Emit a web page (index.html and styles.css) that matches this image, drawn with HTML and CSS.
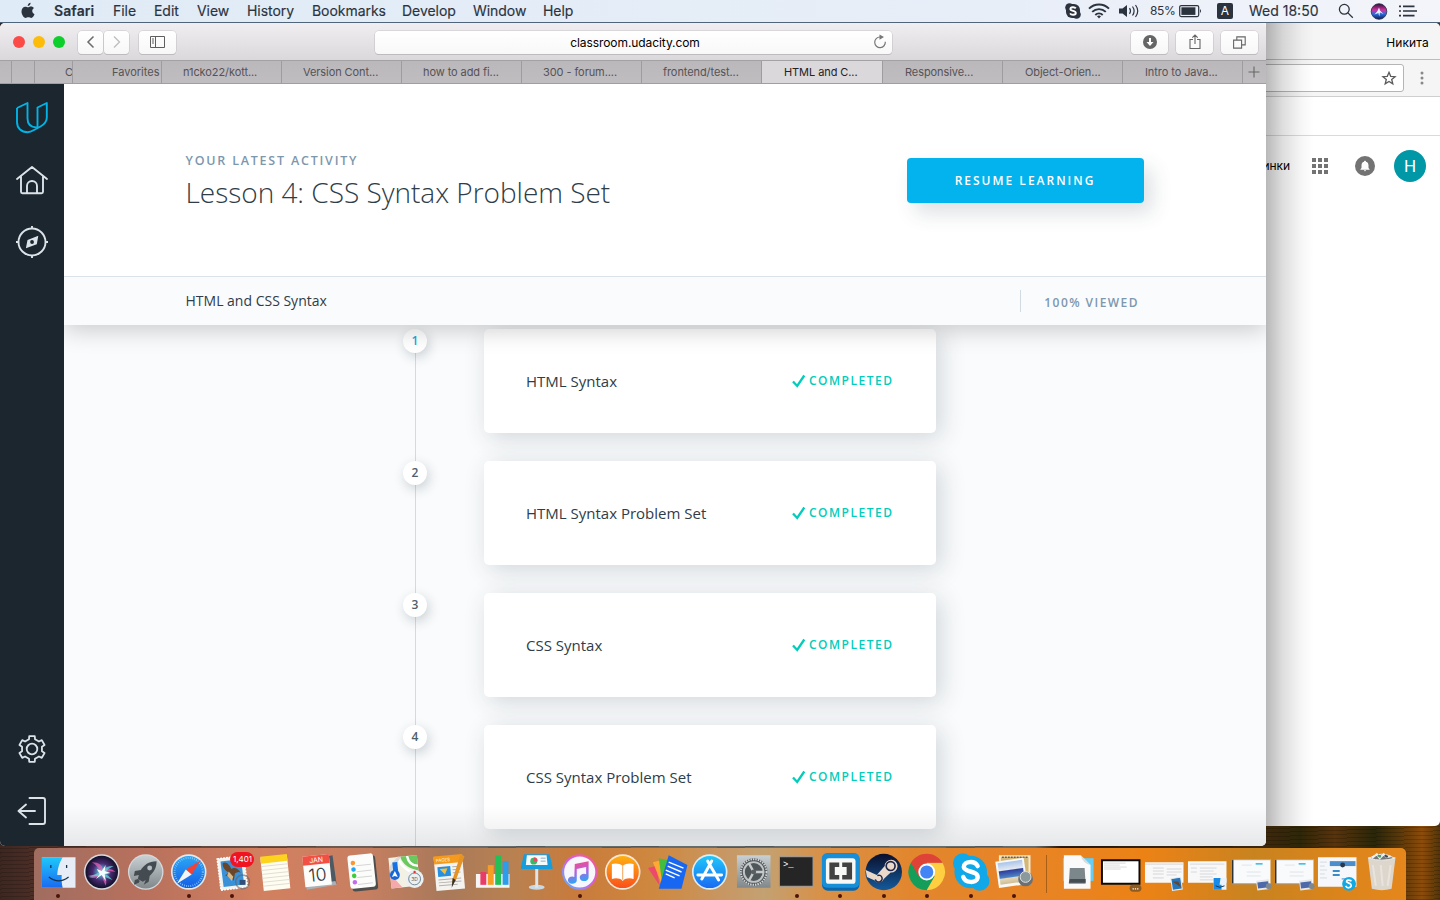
FILE: index.html
```html
<!DOCTYPE html>
<html lang="en">
<head>
<meta charset="utf-8">
<title>Udacity Classroom</title>
<link rel="stylesheet" href="styles.css">
</head>
<body>
<div class="desktop">

  <header class="menubar">
    <svg class="apple" width="14" height="18" viewBox="0 0 14 18"><path d="M9.600 .8c.1 1.700-1.200 3.300-2.900 3.300C6.500 2.500 8 .9 9.600.8zM7 5.300c.7 0 1.600-.8 3-.8 1.200 0 2.300.6 3 1.600-2.600 1.500-2.100 5 .500 6.100-.6 1.600-1.900 3.700-3.200 3.700-1.100 0-1.600-.7-2.900-.7s-1.900.7-2.900.7C2.700 15.900.5 12.500.5 9.500c0-3 1.900-4.800 3.800-4.800 1.200 0 2 .6 2.700.6z" fill="#2b333e"/></svg>
    <nav class="menu">
      <b>Safari</b><span>File</span><span>Edit</span><span>View</span><span>History</span><span>Bookmarks</span><span>Develop</span><span>Window</span><span>Help</span>
    </nav>
    <svg class="sys-skype" width="16" height="16" viewBox="0 0 16 16"><rect x="1" y="1" width="14" height="14" rx="6" fill="#2b333e"/><circle cx="4.500" cy="4.500" r="4.300" fill="#2b333e"/><circle cx="11.500" cy="11.500" r="4.300" fill="#2b333e"/><path d="M10.800 5.400C9.600 3.600 5.400 3.800 5.400 6c0 2.500 5.400 1.400 5.400 4 0 2.300-4.600 2.400-5.700.4" fill="none" stroke="#fff" stroke-width="1.900"/></svg>
    <svg class="sys-wifi" width="22" height="16" viewBox="0 0 22 16" fill="none" stroke="#2b333e" stroke-width="1.900"><path d="M1 5.600a14.200 14.200 0 0 1 20 0M4.200 8.900a9.700 9.700 0 0 1 13.600 0M7.300 12a5.300 5.300 0 0 1 7.400 0"/><path d="M11 15.500l-2-2.200a3 3 0 0 1 4 0z" fill="#2b333e" stroke="none"/></svg>
    <svg class="sys-vol" width="22" height="16" viewBox="0 0 22 16"><path d="M1 5.500h3.500L9 2v12l-4.500-3.500H1z" fill="#2b333e"/><path d="M11.500 5.200q2 2.800 0 5.600M14.500 3.500q3.200 4.500 0 9M17.500 2q4.500 6 0 12" fill="none" stroke="#2b333e" stroke-width="1.200"/></svg>
    <span class="battery-text">85%</span>
    <svg class="sys-batt" width="24" height="14" viewBox="0 0 24 14"><rect x=".7" y="1.600" width="19" height="11" rx="1.500" fill="none" stroke="#2b333e" stroke-width="1.200"/><rect x="2.400" y="3.300" width="14" height="7.600" fill="#2b333e"/><path d="M21 5q2 2 0 4z" fill="#2b333e"/></svg>
    <span class="input-source">A</span>
    <span class="clock">Wed 18:50</span>
    <svg class="sys-search" width="16" height="16" viewBox="0 0 16 16" fill="none" stroke="#2b333e" stroke-width="1.300"><circle cx="6.300" cy="6.300" r="4.900"/><path d="M9.900 9.900l4.900 4.900"/></svg>
    <svg class="sys-siri" width="17" height="17" viewBox="0 0 17 17"><defs><linearGradient id="siri-s" x2="0" y2="1"><stop offset="0" stop-color="#2a1138"/><stop offset=".4" stop-color="#d62fa0"/><stop offset=".65" stop-color="#2a6ee0"/><stop offset="1" stop-color="#101a50"/></linearGradient></defs><circle cx="8" cy="8.500" r="7.800" fill="url(#siri-s)" stroke="#262b45" stroke-width=".8"/><path d="M8 4.500l1 3 3.500 3.500L9 9.500l-.8 4-.8-3.500-3.900 1.500 3-3.500z" fill="#dff3ff"/></svg>
    <svg class="sys-list" width="19" height="14" viewBox="0 0 19 14" stroke="#2b333e" stroke-width="1.700"><path d="M4 2.300h11.500M4 7h14M4 11.700h11.500M0 2.300h2M0 7h2M0 11.700h2"/></svg>
  </header>

  <section class="chrome-window">
    <div class="chrome-title">Никита</div>
    <div class="chrome-bar">
      <div class="omnibox"><svg width="16" height="16" viewBox="0 0 16 16"><path d="M8 2.300l1.700 4 4.400.4-3.400 2.800 1.100 4.300L8 11.500l-3.800 2.300 1.100-4.300-3.400-2.800 4.400-.4z" fill="none" stroke="#5a5a5a" stroke-width="1.300"/></svg></div>
      <svg class="kebab" width="4" height="14" viewBox="0 0 4 14" fill="#888"><circle cx="2" cy="2" r="1.500"/><circle cx="2" cy="7" r="1.500"/><circle cx="2" cy="12" r="1.500"/></svg>
    </div>
    <div class="chrome-strip"></div>
    <div class="google-bar">
      <span class="images-link">Картинки</span>
      <svg width="16" height="16" viewBox="0 0 16 16" fill="#737373"><path d="M0 0h4v4H0zM6 0h4v4H6zM12 0h4v4h-4zM0 6h4v4H0zM6 6h4v4H6zM12 6h4v4h-4zM0 12h4v4H0zM6 12h4v4H6zM12 12h4v4h-4z"/></svg>
      <svg class="bell" width="20" height="20" viewBox="0 0 20 20"><circle cx="10" cy="10" r="10" fill="#737373"/><path d="M10 4.800c.7 0 1 .4 1 1 1.800.5 2.500 1.900 2.500 3.700v2.500l1.100 1.200v.5H5.400v-.5L6.500 12V9.500c0-1.800.7-3.200 2.500-3.700 0-.6.3-1 1-1zM8.900 14.200h2.200q-.2 1-1.100 1t-1.100-1z" fill="#fff"/></svg>
      <span class="avatar">H</span>
    </div>
  </section>

  <main class="safari">
    <div class="toolbar">
      <i class="light red"></i><i class="light yellow"></i><i class="light green"></i>
      <div class="btn back"><svg width="10" height="14" viewBox="0 0 10 14"><path d="M7.500 1.500L2 7l5.500 5.500" fill="none" stroke="#6b6b6b" stroke-width="1.500"/></svg></div>
      <div class="btn fwd"><svg width="10" height="14" viewBox="0 0 10 14"><path d="M2 1.500L7.500 7 2 12.500" fill="none" stroke="#bdbdbd" stroke-width="1.300"/></svg></div>
      <div class="btn side"><svg width="15" height="12" viewBox="0 0 15 12"><path d="M.5.500h14v11H.5zM5.500.500v11M2 3h2M2 5h2M2 7h2" fill="none" stroke="#5e5e5e"/></svg></div>
      <div class="address"><span>classroom.udacity.com</span><svg width="14" height="14" viewBox="0 0 14 14"><path d="M12.300 6.800A5.300 5.300 0 1 1 7 2" fill="none" stroke="#777" stroke-width="1.200"/><path d="M6.500-.5L11 2 6.500 4.800z" fill="#777"/></svg></div>
      <div class="btn tool down"><svg width="14" height="14" viewBox="0 0 14 14"><circle cx="7" cy="7" r="7" fill="#666"/><path d="M6 3h2v4h2.500L7 11 3.500 7H6z" fill="#fff"/></svg></div>
      <div class="btn tool"><svg width="12" height="16" viewBox="0 0 12 16" fill="none" stroke="#666" stroke-width="1.100"><path d="M4 5.500H1v9h10v-9H8M6 10V1.200M3.300 3.700L6 1l2.700 2.700"/></svg></div>
      <div class="btn tool"><svg width="13" height="13" viewBox="0 0 13 13" fill="none" stroke="#666" stroke-width="1.100"><path d="M.6 4.100h8v8h-8zM3.800 4V.9h8.400v8H8.700"/></svg></div>
    </div>
    <div class="tabs">
      <span></span><span></span><span class="pin">C</span><span class="fav">Favorites</span>
      <span>n1cko22/kott...</span><span>Version Cont...</span><span>how to add fi...</span><span>300 - forum....</span><span>frontend/test...</span><span class="active">HTML and C...</span><span>Responsive...</span><span>Object-Orien...</span><span>Intro to Java...</span>
      <span class="plus"><svg width="12" height="12" viewBox="0 0 12 12"><path d="M6 .5v11M.5 6h11" stroke="#666" stroke-width="1.100"/></svg></span>
    </div>
    <div class="page">
      <aside class="rail">
        <svg class="logo" width="32" height="32" viewBox="0 0 32 32" fill="none" stroke="#02b3e4" stroke-width="1.900" stroke-linejoin="round"><path d="M1 6L11.500 1V16.500c0 5.500 3.500 8.700 9 9M1 6V20c0 6.500 4.500 10.200 10.500 10.200 2.500 0 4.300-.9 6.500-2.200l6.500-3.500c4-2.300 6.300-5 6.300-9V1L21.500 5.500V25.700"/></svg>
        <svg class="home" width="32" height="30" viewBox="0 0 32 30" fill="none" stroke="#dbe2e8" stroke-width="1.900" stroke-linecap="round" stroke-linejoin="round"><path d="M1 14L16 2l15 12M5 11.500v15.200q0 1.500 1.500 1.500h19q1.500 0 1.500-1.500V11.500M11 28v-7a5 5 0 0 1 10 0v7"/></svg>
        <svg class="compass" width="32" height="32" viewBox="0 0 32 32" fill="none" stroke="#dbe2e8" stroke-width="1.900"><circle cx="16" cy="16" r="13.500"/><path d="M16 0v3M16 29v3M0 16h3M29 16h3"/><path fill="#dbe2e8" fill-rule="evenodd" stroke="none" d="M22.300 9.700l-1.500 8.600-10.900 4 1.600-8.400zM16 14.100a1.900 1.900 0 1 0 .1 3.800 1.900 1.900 0 0 0-.1-3.800z"/></svg>
        <svg class="gear" width="28" height="28" viewBox="-14 -14 28 28" fill="none" stroke="#dbe2e8" stroke-width="1.800" stroke-linejoin="round"><circle r="5.300"/><path d="M-3-9.750L-2.750-12.900H2.750L3-9.750 6.940-7.470 9.800-8.830 12.550-4.070 9.940-2.280V2.280L12.550 4.070 9.800 8.830 6.940 7.470 3 9.750 2.750 12.900H-2.750L-3 9.750-6.940 7.470-9.800 8.830-12.550 4.070-9.940 2.280V-2.280L-12.550-4.070-9.800-8.830-6.940-7.470z"/></svg>
        <svg class="exit" width="30" height="28" viewBox="0 0 30 28" fill="none" stroke="#dbe2e8" stroke-width="1.900" stroke-linecap="round" stroke-linejoin="round"><path d="M12.500 1H26q2 0 2 2v22q0 2-2 2H12.500M18 14H1.500M9 7.500L1.500 14 9 20.500"/></svg>
      </aside>
      <div class="classroom">
        <section class="hero">
          <div class="latest"><p class="eyebrow">YOUR LATEST ACTIVITY</p><h1>Lesson 4: CSS Syntax Problem Set</h1></div>
          <button class="resume">RESUME LEARNING</button>
        </section>
        <section class="subbar"><span class="subject">HTML and CSS Syntax</span><span class="viewed">100% VIEWED</span></section>
        <ol class="lessons">
          <li class="current"><div class="step"><span>1</span></div><article><h2>HTML Syntax</h2><svg width="14" height="14" viewBox="0 0 14 14"><path d="M1 7.500L5.200 12 12.300 1.500" fill="none" stroke="#02ccba" stroke-width="2.300"/></svg><em>COMPLETED</em></article></li>
          <li><div class="step"><span>2</span></div><article><h2>HTML Syntax Problem Set</h2><svg width="14" height="14" viewBox="0 0 14 14"><path d="M1 7.500L5.200 12 12.300 1.500" fill="none" stroke="#02ccba" stroke-width="2.300"/></svg><em>COMPLETED</em></article></li>
          <li><div class="step"><span>3</span></div><article><h2>CSS Syntax</h2><svg width="14" height="14" viewBox="0 0 14 14"><path d="M1 7.500L5.200 12 12.300 1.500" fill="none" stroke="#02ccba" stroke-width="2.300"/></svg><em>COMPLETED</em></article></li>
          <li><div class="step"><span>4</span></div><article><h2>CSS Syntax Problem Set</h2><svg width="14" height="14" viewBox="0 0 14 14"><path d="M1 7.500L5.200 12 12.300 1.500" fill="none" stroke="#02ccba" stroke-width="2.300"/></svg><em>COMPLETED</em></article></li>
        </ol>
      </div>
    </div>
  </main>

  <footer class="dock">
    <svg width="0" height="0" class="defs"><defs>
      <linearGradient id="blue" x2="0" y2="1"><stop offset="0" stop-color="#1fc8fa"/><stop offset="1" stop-color="#1a6af2"/></linearGradient>
      <linearGradient id="blue2" x2="0" y2="1"><stop offset="0" stop-color="#2ba7f4"/><stop offset="1" stop-color="#155de8"/></linearGradient>
      <linearGradient id="grey" x2="0" y2="1"><stop offset="0" stop-color="#c9d0d3"/><stop offset="1" stop-color="#80888b"/></linearGradient>
      <linearGradient id="orange" x2="0" y2="1"><stop offset="0" stop-color="#ffb011"/><stop offset="1" stop-color="#f9501c"/></linearGradient>
      <linearGradient id="steam" x2="0" y2="1"><stop offset="0" stop-color="#0b0f2c"/><stop offset="1" stop-color="#135a9c"/></linearGradient>
      <linearGradient id="note" x2=".2" y2="1"><stop offset="0" stop-color="#fb4b6d"/><stop offset=".5" stop-color="#c05bdc"/><stop offset="1" stop-color="#28a8f5"/></linearGradient>
      <linearGradient id="ring" x1="1" x2="0" y2="1"><stop offset="0" stop-color="#fb5b74"/><stop offset=".5" stop-color="#d65be8"/><stop offset="1" stop-color="#48c0fb"/></linearGradient>
      <linearGradient id="sea" x2="0" y2="1"><stop offset="0" stop-color="#a9c4ea"/><stop offset=".35" stop-color="#e4eaf2"/><stop offset=".4" stop-color="#303f9a"/><stop offset=".7" stop-color="#4b82c8"/><stop offset=".75" stop-color="#e5d9b9"/><stop offset="1" stop-color="#cdbb94"/></linearGradient>
      <radialGradient id="siri"><stop offset="0" stop-color="#eaffff"/><stop offset=".2" stop-color="#51a9ca"/><stop offset=".55" stop-color="#4a2a72"/><stop offset="1" stop-color="#101028"/></radialGradient>
    </defs></svg>

    <div class="app run"><svg viewBox="-22 -22 44 44"><path d="M-17-15h34v31h-34z" fill="#e6edf6"/><path d="M-17-15H4C0-8-1-3-1.500 3H3c-.2 5 0 9 1 13h-21z" fill="url(#blue)"/><path d="M-8-7v3M8-7v3M-10 5Q0 13 10 5" fill="none" stroke="#12314c" stroke-width="1.300"/></svg></div>
    <div class="app"><svg viewBox="-22 -22 44 44"><circle r="18" fill="#d9d9de"/><circle r="16.500" fill="url(#siri)"/><path d="M-10-10Q2-10 1 0 8-6 14 0 6-2 2 1 6 8 4 14 1 8 0 2-7 8-13 5-6 3-2 0-4-7-10-10z" fill="#f064b6" opacity=".7"/><path d="M-14 4Q-6 3 0-1 6-7 12-6 6-3 2 1 8 4 11 8 4 6 0 2-6 6-14 4z" fill="#5fe6dc" opacity=".7"/><path d="M-5-3L0-1l4-6-1 6 6 2-6 1 1 7-4-6-6 4 4-5z" fill="#f2ffff"/></svg></div>
    <div class="app"><svg viewBox="-22 -22 44 44"><circle r="18" fill="#d5d9db"/><circle r="16.700" fill="url(#grey)"/><path d="M11-11C3-11-2-7-5-2l-6 1-1 5 5-1-1 4 5 3 3-2-2 5 5-3 1-6C8 0 11-4 11-11zM-8 7l-3 1-1 5 5-2 1-2z" fill="#454c51"/><circle cx="4" cy="-4" r="2.500" fill="#b7bdc1"/></svg></div>
    <div class="app run"><svg viewBox="-22 -22 44 44"><circle r="18" fill="#e5e7e9"/><circle r="16.300" fill="url(#blue2)"/><circle r="14.300" fill="none" stroke="#8ed0fb" stroke-width="2" stroke-dasharray=".7 1.500"/><path d="M12-12L3 2.500-3-2.500z" fill="#f24236"/><path d="M-12 12L-3-2.500 3 2.500z" fill="#f4f4f4"/></svg></div>
    <div class="app run mail"><svg viewBox="-22 -22 44 44"><g transform="rotate(-7)"><path d="M-13-15h27v32h-27z" fill="#f2f3ef" stroke="#fff" stroke-width="1.500" stroke-dasharray="2 1"/><path d="M-10-12h21v26h-21z" fill="#3a91d7"/><path d="M-8-10C-5-12-1-8 0-3 3-5 7-3 9 2 7 0 5 1 3 2L1 9-3 4-7 3-3 0C-6-2-9-6-8-10z" fill="#6b4527"/><path d="M-3-1l4 6-2 4-4-6z" fill="#d7b98a"/></g><circle cx="11" cy="10" r="7" fill="none" stroke="#646066" stroke-width="1.500" opacity=".6"/><path d="M8 8h6v5H8z" fill="#305079"/></svg><span class="badge">1,401</span></div>
    <div class="app"><svg viewBox="-22 -22 44 44"><g transform="rotate(-6)"><path d="M-14-16h27v34h-27z" fill="#fffdf2"/><path d="M-14-17h27v7h-27z" fill="#fed31e"/><path d="M-14-7h27M-14-3h27M-14 1h27M-14 5h27M-14 9h27M-14 13h27" stroke="#d4d2c8" stroke-width=".7"/></g></svg></div>
    <div class="app"><svg viewBox="-22 -22 44 44"><path d="M-14-11l28-6 4 29-30 5z" fill="#4d5a63"/><path d="M-13 14l30-5 1 4-30 5z" fill="#a9b1b6"/><g transform="rotate(-6)"><path d="M-15-17h27v31h-27z" fill="#fcfcfb"/><path d="M-15-17h27v9h-27z" fill="#f24f45"/><text x="-1.500" y="-9.800" class="cal-month">JAN</text><text x="-1.500" y="9" class="cal-day">10</text></g></svg></div>
    <div class="app"><svg viewBox="-22 -22 44 44"><g transform="rotate(-6)"><rect x="-12" y="-16" width="26" height="35" rx="3" fill="#4e4e4d"/><rect x="-14" y="-18" width="26" height="34" rx="3" fill="#fcfcfb"/><path d="M-6-7H9M-6-1H9M-6 5H9M-6 12H9" stroke="#d6d6d6"/><circle cx="-9" cy="-10" r="2.300" fill="#ff9430"/><circle cx="-9" cy="-3.500" r="2.300" fill="#21a6f2"/><circle cx="-9" cy="3" r="2.300" fill="#39cf36"/><circle cx="-9" cy="9.500" r="2.300" fill="#c66af0"/></g></svg></div>
    <div class="app"><svg viewBox="-22 -22 44 44"><g transform="rotate(-6)"><path d="M-16-16h29v31h-29z" fill="#f3f0e4"/><path d="M-4-16h17v16C5-3-2-7-4-16z" fill="#6ac85f"/><path d="M-7-16Q-2 0 13 3M3-16Q4-6 13-5" stroke="#fff" stroke-width="2.500" fill="none"/><path d="M-16 0L-5 15h-11z" fill="#f4a9ac"/><path d="M-16-7l9-9h4L-16 1z" fill="#d7dad6"/><path d="M-10-11v16" stroke="#1672e5" stroke-width="5"/></g><circle cx="-11" cy="3" r="5" fill="#1768d6"/><path d="M-11-1l3 6-3-1-3 1z" fill="#fff"/><circle cx="9" cy="7" r="9.200" fill="#edf0f1"/><circle cx="9" cy="7" r="6" fill="none" stroke="#6d8493"/><circle cx="9" cy="0" r="1.200" fill="#e5322e"/><text x="9" y="9" class="three-d">3D</text></svg></div>
    <div class="app"><svg viewBox="-22 -22 44 44"><g transform="rotate(-5)"><path d="M-15-16h29v34h-29z" fill="#f5f3ef"/><path d="M-15-17h29v8h-29z" fill="#f49a1d"/><text x="-13" y="-11" class="pages">PAGES</text><path d="M-12-6H1V4h-13z" fill="#258fe0"/><path d="M-10-4h8l-3 6z" fill="#fbbd31"/><path d="M3-5h8M3-2h8M3 1h8M-12 7H11M-12 10H11M-12 13H7" stroke="#b4b1ac"/></g><path d="M11-18l4 2L6 9l-4 4 1-6z" fill="#e59325"/><path d="M3 6l3 2-4 8z" fill="#31322f"/></svg></div>
    <div class="app"><svg viewBox="-22 -22 44 44"><path d="M-17 2h34v14h-34z" fill="#f5f5f6"/><path d="M-12.500 0h6v13h-6z" fill="#e93b65"/><path d="M-5-7H1v20h-6z" fill="#f69d23"/><path d="M2.500-17h6v30h-6z" fill="#24c057"/><path d="M10-11h6v24h-6z" fill="#2c9deb"/></svg></div>
    <div class="app"><svg viewBox="-22 -22 44 44"><ellipse cy="15.500" rx="8" ry="2.500" fill="#c9d8e2"/><path d="M-1.500-5h3v21h-3z" fill="#dde5ea"/><path d="M-13-18h26l3 13v2h-32v-2z" fill="#159dde"/><path d="M-10-17h20l1 10h-22z" fill="#f5fafc"/><circle cx="-3" cy="-11" r="3.500" fill="#37b969"/><path d="M-3-11v-4a4 4 0 0 1 4 4z" fill="#e94963"/><path d="M4-14h5M4-11h5" stroke="#8baec2"/></svg></div>
    <div class="app run"><svg viewBox="-22 -22 44 44"><circle r="18" fill="url(#ring)"/><circle r="15.800" fill="#f7f7fb"/><path d="M-5-8L9-11V5.500a4.500 3.700 0 1 1-2.500-3.300V-5L-3-3V8.500A4.500 3.700 0 1 1-5.500 5z" fill="url(#note)"/></svg></div>
    <div class="app"><svg viewBox="-22 -22 44 44"><circle r="18" fill="#f5e9da"/><circle r="16.300" fill="url(#orange)"/><path d="M0-6C-3-9-8-9-11-8V7c4-1 8-1 11 2 3-3 7-3 11-2V-8C8-9 3-9 0-6z" fill="#fff"/><path d="M0-6V8" stroke="#f18a29" stroke-width=".8"/></svg></div>
    <div class="app"><svg viewBox="-22 -22 44 44"><path d="M-19-4l8-2 4 20z" fill="#ec496b"/><path d="M-14-10l8-2 2 27z" fill="#fda932"/><path d="M-8-14L2-12-4 16z" fill="#43bd3e"/><path d="M2-17L21-7 15 17H-8z" fill="#1767f3"/><path d="M2-10L17-4M1-6l14 6M-1-2l14 6M-1 2l9 4" stroke="#fff" stroke-width="1.400"/></svg></div>
    <div class="app"><svg viewBox="-22 -22 44 44"><circle r="18" fill="#dcecf5"/><circle r="16.300" fill="url(#blue)"/><path d="M2-11L-8 7M-2-11L9 8M-12 3H12" stroke="#fff" stroke-width="3" stroke-linecap="round"/></svg></div>
    <div class="app"><svg viewBox="-22 -22 44 44"><path d="M-17-17h34v33h-34z" fill="url(#grey)"/><circle r="14" fill="#50575b"/><circle r="13" fill="none" stroke="#d2d4d4" stroke-width="2" stroke-dasharray="1.500 1"/><circle r="10" fill="none" stroke="#c1c4c5" stroke-width="2"/><path d="M0 0h10M0 0l-5-9M0 0l-5 9" stroke="#c7cacb" stroke-width="2.500"/><circle r="2.500" fill="#596064"/></svg></div>
    <div class="app run"><svg viewBox="-22 -22 44 44"><path d="M-18-16h35v31h-35z" fill="#999"/><path d="M-17-15h33v29h-33z" fill="#252525"/><text x="-14" y="-5" class="prompt">&gt;_</text></svg></div>
    <div class="app run"><svg viewBox="-22 -22 44 44"><rect x="-19" y="-19" width="38" height="38" rx="6" fill="#0867ae"/><rect x="-19" y="-19" width="38" height="35" rx="5" fill="#178ed6"/><rect x="-15" y="-14" width="30" height="26" rx="3" fill="#f8f8f7"/><path d="M-1.500-9.500h-10v17h10V3h-4.500v-8h4.500zM1.500-9.500h10v17h-10V3H6v-8H1.500z" fill="#424242"/></svg></div>
    <div class="app run"><svg viewBox="-22 -22 44 44"><circle r="18.500" fill="url(#steam)"/><path d="M-18.300-2L-7 3 1-6a6.500 6.500 0 1 1 6 6.500L0 7a5 5 0 0 1-9 1.500l-8-3.500z" fill="#ead9cb"/><circle cx="7" cy="-6" r="4.500" fill="none" stroke="#21284a" stroke-width="1.700"/><path d="M-8.500 7.500a3.500 3.500 0 1 0 2-4" fill="none" stroke="#21284a" stroke-width="1.500"/></svg></div>
    <div class="app run"><svg viewBox="-22 -22 44 44"><path d="M-16-9.300A18.500 18.500 0 0 0 0 18.500L8 4.600 0-9.300z" fill="#149e5a"/><path d="M0 18.500A18.500 18.500 0 0 0 16-9.300H0L8 4.600z" fill="#ffce41"/><path d="M-16-9.300A18.500 18.500 0 0 1 16-9.300H0L-8 4.600z" fill="#df4337"/><circle r="8.500" fill="#fff"/><circle r="6.700" fill="#4385f5"/></svg></div>
    <div class="app run"><svg viewBox="-22 -22 44 44"><circle r="16.500" fill="#10a8e8"/><circle cx="-8" cy="-9" r="10" fill="#10a8e8"/><circle cx="9" cy="9" r="10" fill="#10a8e8"/><path d="M7-6C4-12-7-11-7-5-6 1 8-2 7 6 6 12-6 11-7.500 5" fill="none" stroke="#fff" stroke-width="4.500" stroke-linecap="round"/></svg></div>
    <div class="app run"><svg viewBox="-22 -22 44 44"><path d="M-14-16h30v28h-30z" fill="#d4b679" stroke="#f6eac9" stroke-width="2"/><path d="M-12-15h27" stroke="#775b35" stroke-width="1.500" stroke-dasharray="2 1"/><g transform="rotate(-8)"><path d="M-17-13h29v27h-29z" fill="#f8f8f5"/><path d="M-15-11h25v22h-25z" fill="url(#sea)"/></g><circle cx="12" cy="7" r="7.500" fill="#6c7072"/><circle cx="12" cy="5" r="5.500" fill="#8b989c" stroke="#e0e3e1"/></svg></div>
    <i class="separator"></i>
    <div class="app"><svg viewBox="-22 -22 44 44"><path d="M-15-14h31v23h-31z" fill="#66cef5"/><path d="M-14-17H3L13-7v24h-27z" fill="#fafafa"/><path d="M3-17q2 8 10 10z" fill="#d6dadd"/><path d="M-8-4H7l1 16H-9z" fill="#7c878b"/><path d="M-8 7H8v4H-9z" fill="#444d51"/></svg></div>
    <div class="app"><svg viewBox="-22 -22 44 44"><path d="M-20-13h40v26h-40z" fill="#0b0b0b"/><path d="M-18-11h36v22h-36z" fill="#fff"/><path d="M-17-9H5M-17-7H-1M-17-5H6M-17-3H0" stroke="#ccc" stroke-width=".7"/><rect x="9" y="13" width="12" height="7" rx="3.500" fill="#8e5c21"/><path d="M12 17h6" stroke="#fff" stroke-width="1.300" stroke-dasharray="1.300 1"/></svg></div>
    <div class="app"><svg viewBox="-22 -22 44 44"><path d="M-20-10h39v21h-39z" fill="#f8f8f8"/><path d="M-20-8h39M-12-4h11M-12-1h11M-12 2h11M2-3h15M2 0h15M2 3h10M-12 6h11" stroke="#ccced1" stroke-width=".8"/><g transform="translate(12 12) rotate(-8)"><path d="M-5-6H5V6H-5z" fill="#2975ba" stroke="#e9eeed"/><path d="M-4-3l8 7-2-6z" fill="#6a4429"/></g></svg></div>
    <div class="app"><svg viewBox="-22 -22 44 44"><path d="M-20-11h39v22h-39z" fill="#f8f8f8"/><path d="M-18-8h35M-17-4h6M-17 0h6M-8-4H9M-8-1H6M-8 2H9M-8 5H5M-8 8H8" stroke="#ced0d2" stroke-width=".8"/><path d="M6 6h13v12H6z" fill="#eaf3fb"/><path d="M6 6h7l-1 7h2v5H6z" fill="#188be9"/><path d="M8 14q4 3 9 0" fill="none" stroke="#143554"/></svg></div>
    <div class="app"><svg viewBox="-22 -22 44 44"><path d="M-20-13h39v25h-39z" fill="#f8fafb"/><path d="M-20-13h1.500v25h-1.500z" fill="#28343a"/><path d="M-20-12.500h39M-20 12h39" stroke="#939aa2"/><path d="M4-9h7v1.500H4z" fill="#2cb8e8"/><path d="M-10-7H0M-5 0H9M-5 4H9" stroke="#e2e6e8"/><g transform="translate(12 13) rotate(-7)"><path d="M-7-5H6V5H-7z" fill="#e5e7e9"/><path d="M-6-3H5V3H-6z" fill="#4d69a9"/><circle cx="5" cy="2" r="3" fill="#81888c"/></g></svg></div>
    <div class="app"><svg viewBox="-22 -22 44 44"><path d="M-20-13h39v25h-39z" fill="#f8fafb"/><path d="M-20-13h1.500v25h-1.500z" fill="#28343a"/><path d="M-20-12.500h39M-20 12h39" stroke="#939aa2"/><path d="M4-9h7v1.500H4z" fill="#2cb8e8"/><path d="M-10-7H0M-5 0H9M-5 4H9" stroke="#e2e6e8"/><g transform="translate(12 13) rotate(-7)"><path d="M-7-5H6V5H-7z" fill="#e5e7e9"/><path d="M-6-3H5V3H-6z" fill="#4d69a9"/><circle cx="5" cy="2" r="3" fill="#81888c"/></g></svg></div>
    <div class="app"><svg viewBox="-22 -22 44 44"><path d="M-20-15h39v30h-39z" fill="#f5f7fa"/><path d="M-8-11h26v5H-8z" fill="#4c8dcb"/><circle cx="5" cy="-7" r="2.500" fill="#27394d"/><path d="M-5-1H2M-5 3H2" stroke="#398cc9" stroke-width="2"/><path d="M4 7h10" stroke="#398cc9"/><path d="M-18-10h7M-18-6h5M-18-2h7M-18 2h5M-18 6h7" stroke="#d5dbe0"/><circle cx="11.500" cy="12" r="7" fill="#12a8e3"/><path d="M14 9q-5-2-5 1 1 1 4 2 2 3-2 4-2 0-3-2" fill="none" stroke="#fff" stroke-width="1.700"/></svg></div>
    <div class="app"><svg viewBox="-22 -22 44 44"><path d="M-14-15h28l-4 32q-10 3-20 0z" fill="#dcdad6" opacity=".95"/><path d="M-13-14q13-8 26 0-13 4-26 0z" fill="#747674" stroke="#eee"/><path d="M-10-14l5-4 3 4 4-4 3 3 4-1" fill="none" stroke="#eee" stroke-width="2"/><path d="M-4-17l3 2" stroke="#4c9b69" stroke-width="2"/><path d="M3-17l3 2" stroke="#37445e" stroke-width="2"/><path d="M-9-7L-6 14M9-7L6 14M-1-7l2 21" stroke="#fff" opacity=".35" stroke-width="2"/></svg></div>
  </footer>
</div>
</body>
</html>
```
FILE: styles.css
```css
* { box-sizing: border-box; }
body { margin: 0; font-family: Inter, "Liberation Sans", sans-serif; }
svg { display: block; flex: none; overflow: visible; }
.desktop {
  position: relative; width: 1440px; height: 900px; overflow: hidden;
  background:
    repeating-linear-gradient(178deg, rgba(0,0,0,.18) 0 1px, transparent 1px 4px),
    linear-gradient(90deg, #3c2720 0, #4a2d25 30px, #6e5548 300px, #666b6c 500px, #666b6c 1035px, #2b1a0b 1060px, #3b270a 1270px, #2e2609 1300px, #59330b 1335px, #29260a 1375px, #704009 1410px, #8d4c0b 1422px, #523507 1440px);
}

/* Menu bar */
.menubar {
  display: flex; align-items: center; height: 23px; padding-left: 20.500px;
  background: linear-gradient(90deg, #dfebf6, #e8eef8 70%, #f3f5fa);
  border-bottom: 1px solid #50657b; color: #2b333e; font-size: 14px; line-height: 22px; white-space: nowrap;
}
.menu { display: grid; grid-template-columns: 59px 41px 43px 50px 65px 90px 71px 70px 40px; margin-left: 19.500px; letter-spacing: -.05px; -webkit-text-stroke: .15px #2b333e; }
.menu b { font-weight: 600; letter-spacing: .1px; }
.sys-skype { margin-left: 482px; }
.sys-wifi { margin-left: 7px; }
.sys-vol { margin-left: 8px; }
.battery-text { width: 29px; margin-left: 10px; font-size: 12px; letter-spacing: -.3px; }
.input-source { width: 16px; height: 16px; margin-left: 14px; border-radius: 2px; background: #2b333e; color: #fff; font-size: 12px; line-height: 16px; text-align: center; }
.clock { width: 70px; margin-left: 16px; -webkit-text-stroke: .15px #2b333e; }
.sys-search { margin-left: 19px; }
.sys-siri { margin-left: 17px; }
.sys-list { margin-left: 11px; }

/* Background browser window */
.chrome-window { position: absolute; left: 1180px; top: 23px; width: 260px; height: 803px; background: #fff; border-radius: 0 5px 5px 0; overflow: hidden; }
.chrome-title { height: 37px; padding: 0 11px; border-bottom: 1px solid #bcbcbc; background: #f5f5f5; font-size: 12px; line-height: 39px; letter-spacing: .15px; text-align: right; }
.chrome-bar { display: flex; height: 37px; align-items: center; border-bottom: 1px solid #cfcfcf; background: #f5f5f5; }
.omnibox { display: flex; align-items: center; justify-content: flex-end; width: 224px; height: 28px; padding-right: 6px; border: 1px solid #b5b5b5; border-radius: 3px; background: #fff; }
.kebab { margin-left: 16px; }
.chrome-strip { height: 39px; border-bottom: 1px solid #dadada; }
.google-bar { display: flex; height: 60px; align-items: center; justify-content: flex-end; padding-right: 14px; }
.images-link { margin: -1px 22px 0 0; font-size: 12px; letter-spacing: -.1px; }
.bell { margin: 0 19px 0 27px; }
.avatar { width: 32px; height: 32px; border-radius: 50%; background: #0097a7; color: #fff; font: 17px/33px Roboto, sans-serif; text-align: center; }
.chrome-window::after { content: ""; position: absolute; left: 86px; top: 0; width: 48px; height: 803px; background: linear-gradient(90deg, rgba(0,0,0,.28), rgba(0,0,0,.13) 35%, rgba(0,0,0,.03) 75%, transparent); }

/* Safari window */
.safari { position: absolute; left: 0; top: 23px; width: 1266px; height: 823px; border-radius: 5px; overflow: hidden; background: #f9fbfc; }
.toolbar { display: flex; align-items: center; height: 37px; padding: 1px 7px 0 13px; background: linear-gradient(#f0eef0, #dad8da); }
.light { width: 12px; height: 12px; margin-right: 8px; border-radius: 50%; }
.red { background: #fc4b47; }
.yellow { background: #fdbc09; }
.green { background: #0dcf2b; }
.btn { display: flex; flex: none; align-items: center; justify-content: center; height: 23px; border-radius: 4px; background: linear-gradient(#fff, #f7f7f7); box-shadow: 0 0 0 .6px #c6c4c6, 0 1px 0 #b4b2b4; }
.back { width: 25px; margin-left: 5px; }
.fwd { width: 25px; margin-left: 1px; }
.side { width: 37px; margin-left: 10px; }
.address { position: relative; display: flex; flex: none; align-items: center; justify-content: center; width: 517px; height: 23px; margin: 0 239px 0 199px; border-radius: 4px; background: linear-gradient(#fff, #f8f8f8); box-shadow: 0 0 0 .6px #c6c4c6, 0 1px 0 #b4b2b4; font-size: 12px; letter-spacing: -.08px; }
.address svg { position: absolute; right: 5px; top: 4px; }
.address span { padding-left: 3px; }
.tool { width: 37px; margin-right: 8px; }
.tool:last-child { margin-right: 0; }
.tabs { display: grid; grid-template-columns: 12px 23px 38px 89px 120px 120px 120px 120px 120px 121px 120px 120px 120px 1fr; height: 24px; border-top: 1px solid #a3a1a3; border-bottom: 1px solid #a09ea0; background: linear-gradient(#bbb8bb, #c0bdc0); color: #555257; font-size: 11px; line-height: 23px; letter-spacing: -.08px; white-space: nowrap; }
.tabs span { overflow: hidden; padding-left: 21px; border-right: 1px solid #9e9c9e; }
.tabs span:nth-child(n+10) { padding-left: 22px; }
.tabs span:nth-child(-n+2) { padding: 0; }
.tabs .pin { padding-left: 30px; }
.tabs .fav { padding-left: 39px; letter-spacing: 0; }
.tabs .active { background: #dbd8db; color: #242225; }
.tabs .plus:last-child { padding: 5px 0 0 5px; border: 0; }

/* Classroom page */
.page { position: relative; display: flex; height: 762px; }
.page::after { content: ""; position: absolute; z-index: 3; left: 64px; right: 0; bottom: 0; height: 40px; background: linear-gradient(transparent, rgba(0,0,0,.08)); }
.rail { display: flex; flex-direction: column; align-items: center; width: 64px; padding-top: 17px; background: #1c262f; }
.logo { margin-top: 1px; }
.home { margin-top: 31px; }
.compass { margin-top: 31px; }
.gear { margin-top: 477px; }
.exit { margin-top: 34px; }
.classroom { width: 1202px; height: 762px; overflow: hidden; background: #f9fbfc; font-family: "Open Sans", sans-serif; }
.hero { position: relative; z-index: 3; display: flex; align-items: flex-start; justify-content: space-between; height: 193px; padding: 0 122px 0 121.500px; border-bottom: 1px solid #dbe2e8; background: #fff; }
.eyebrow { margin: 67px 0 0; color: #7d97ad; font-size: 12.500px; font-weight: 600; line-height: 20px; letter-spacing: 1.780px; }
h1 { margin: 2px 0 0; color: #2e3d49; font-size: 28px; font-weight: 300; line-height: 38px; letter-spacing: -.02px; white-space: nowrap; }
.resume { width: 237px; height: 45px; margin-top: 74px; padding: 0 1px 0 0; border: 0; border-radius: 4px; background: #02b3ee; box-shadow: 8px 10px 20px rgba(46,61,73,.16); color: #fff; font: 600 12px "Open Sans", sans-serif; letter-spacing: 2px; }
.subbar { position: relative; z-index: 2; display: flex; align-items: center; justify-content: space-between; height: 48px; padding: 0 127px 0 121.500px; background: #fafbfd; box-shadow: 0 5px 25px rgba(0,0,0,.2); }
.subject { color: #2e3d49; font-size: 14px; line-height: 46px; }
.viewed { height: 22px; padding: 1px 0 0 23px; border-left: 1px solid #d2dae2; color: #7d97ad; font-size: 12px; font-weight: 600; line-height: 23px; letter-spacing: 1.450px; }
.lessons { margin: 0; padding: 4px 0 0 339px; list-style: none; }
.lessons li { display: flex; height: 132px; }
.step { width: 81px; background: linear-gradient(#d2dbe3, #d2dbe3) 12px 0 / 1px 100% no-repeat; }
.step span { display: block; width: 24px; height: 24px; border-radius: 50%; background: #fff; box-shadow: 2px 4px 12px rgba(46,61,73,.22); color: #4f5e69; font-size: 12px; font-weight: 600; line-height: 24px; text-align: center; }
.current .step span { color: #02b3e4; }
.lessons article { display: flex; align-items: center; width: 452px; height: 104px; padding: 0 42px 2px; border-radius: 5px; background: #fff; box-shadow: 5px 5px 25px rgba(46,61,73,.19); }
.lessons h2 { flex: 1; margin: 2px 0 0; color: #2e3d49; font-size: 15px; font-weight: 400; line-height: 20px; }
.lessons article svg { margin-top: 2px; }
.lessons em { width: 85px; margin-left: 3px; color: #02ccba; font-size: 12px; font-style: normal; font-weight: 600; letter-spacing: 1.500px; }

/* Dock */
.dock { position: absolute; left: 34px; top: 848px; display: flex; width: 1372px; height: 52px; padding: 2px 0 0 2.700px; border-radius: 5px 5px 0 0; background: linear-gradient(90deg, #a06d60 0, #b8715d 110px, #d2805f 230px, #c77f61 330px, #a8795a 410px, #b98150 480px, #c87b3c 540px, #cf883f 620px, #c79763 690px, #c3a172 730px, #d99046 790px, #e2862d 880px, #e88425 1000px, #ec8216 1110px, #c88320 1220px, #d8841b 1290px, #e5871b 1372px); }
.defs { position: absolute; }
.app { position: relative; width: 43.450px; flex: none; }
.app > svg { width: 43.450px; height: 44px; }
.run::after { content: ""; display: block; width: 4px; height: 4px; margin: 0 auto; border-radius: 50%; background: #4b130a; }
.badge { position: absolute; left: 20px; top: 2px; width: 24px; height: 15px; border-radius: 8px; background: #f01420; color: #fff; font-size: 8px; line-height: 15px; text-align: center; }
.separator { width: 1px; height: 38px; margin: 5px 9px 0 10px; background: #a95f16; }
.cal-month { fill: #fff; font-size: 7px; text-anchor: middle; }
.cal-day { fill: #333; font-size: 18px; font-weight: 300; text-anchor: middle; }
.three-d { fill: #536370; font-size: 5px; text-anchor: middle; }
.pages { fill: #fff4d9; font-size: 4.500px; }
.prompt { fill: #fff; font: 9px "Liberation Mono", monospace; }
```
